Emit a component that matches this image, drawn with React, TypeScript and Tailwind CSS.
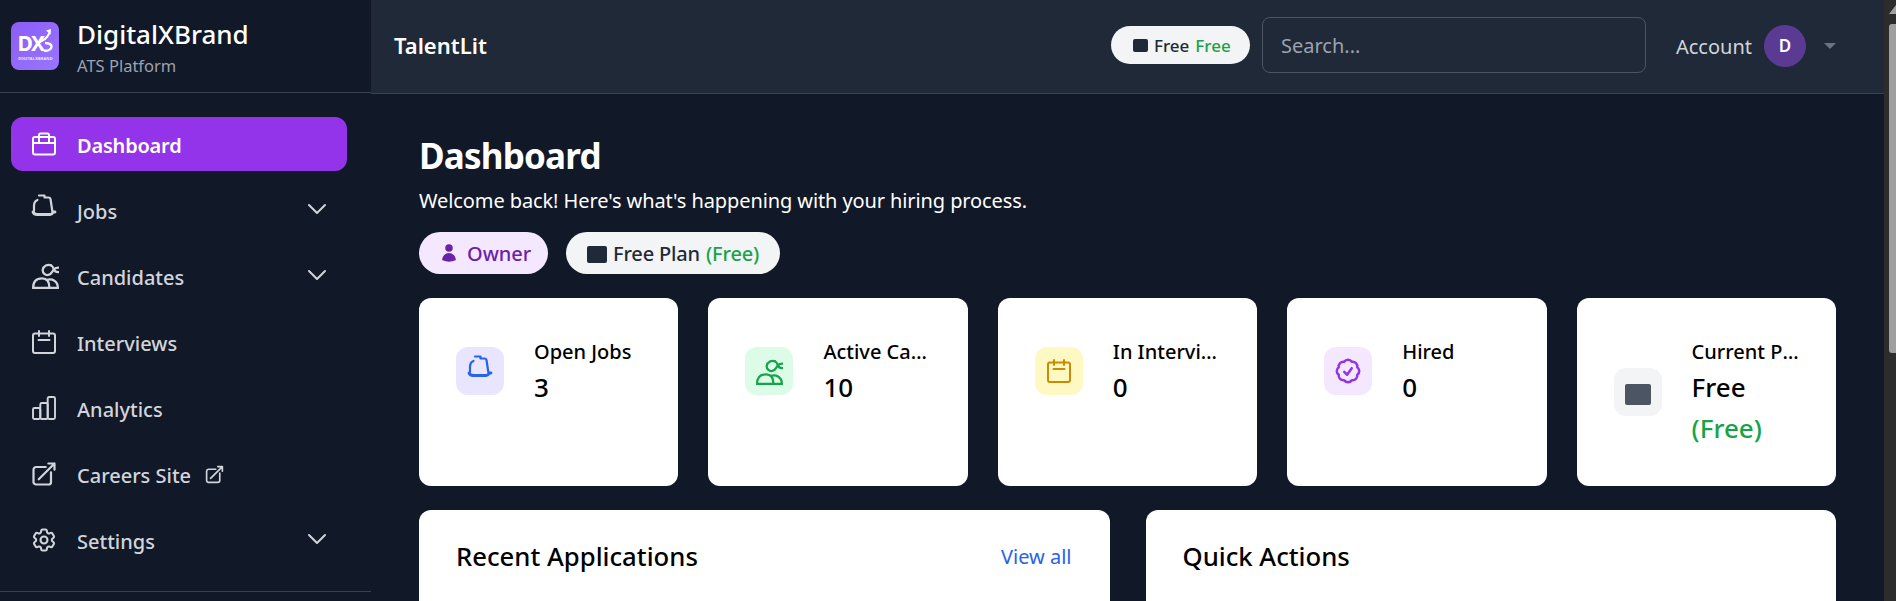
import React from "react";
import {
  HiOutlineCog6Tooth,
  HiOutlineCheckBadge,
  HiOutlineArrowTopRightOnSquare,
  HiUser,
} from "react-icons/hi2";
import { ChevronDown } from "lucide-react";

const font = { fontFamily: '"Noto Sans", "Open Sans", sans-serif' };

function BriefcaseIcon({ className }: { className?: string }) {
  return (
    <svg viewBox="0 0 24 24" fill="none" stroke="currentColor" strokeWidth="2" strokeLinecap="round" strokeLinejoin="round" className={className}>
      <rect x="1" y="5" width="22" height="17.500" rx="2" />
      <path d="M1.200 11h21.600" />
      <path d="M7 11V3a1.500 1.500 0 0 1 1.500-1.500h7A1.500 1.500 0 0 1 17 3v8" />
    </svg>
  );
}

function JobsIcon({ className }: { className?: string }) {
  return (
    <svg viewBox="0 0 24 24" fill="none" stroke="currentColor" strokeWidth="2.200" strokeLinecap="round" strokeLinejoin="round" className={"overflow-visible " + (className ?? "")}>
      <g transform="translate(0,-4)">
        <path d="M7 1.500h5.500v2h4c1 0 1.700.5 2 1.500l1.800 12" />
        <path d="M5.500 6C3 7 2 9 2 12v5" />
        <path d="M1 18c1 2 2 2.500 4 2.500h13c1.500 0 2.500-.7 3-2.500h2" strokeWidth="2.800" />
      </g>
    </svg>
  );
}

function CandidatesIcon({ className }: { className?: string }) {
  return (
    <svg viewBox="0 0 24 24" fill="none" stroke="currentColor" strokeWidth="2" strokeLinecap="round" strokeLinejoin="round" className={className}>
      <path d="M1 23C1 17 4.500 14.500 9 14.500c4 0 6.500 3 6.500 8.500" />
      <path d="M13 16c5-1.500 10 1 10 7" />
      <path d="M1 23h22" />
      <path d="M17 3c-3-1.500-7 .5-7.500 4-.2 3 2.500 5 5 4.500 3-.5 3.500-3.500 5-5 1-1 2.500-1.500 4-1.500" />
      <path d="M17 3c1.500.8 2 2 2.500 3.500.5 1.500 2 2.500 4 2.500" />
    </svg>
  );
}

function CalendarIcon({ className }: { className?: string }) {
  return (
    <svg viewBox="0 0 24 24" fill="none" stroke="currentColor" strokeWidth="2" strokeLinecap="round" strokeLinejoin="round" className={className}>
      <rect x="1" y="3.500" width="22" height="19.500" rx="2" />
      <path d="M7 1v5M17 1v5M6.500 10h11" />
    </svg>
  );
}

function BarsIcon({ className }: { className?: string }) {
  return (
    <svg viewBox="0 0 24 24" fill="none" stroke="currentColor" strokeWidth="1.900" strokeLinecap="round" strokeLinejoin="round" className={className}>
      <rect x="1" y="12" width="7.300" height="11" rx="1.500" />
      <rect x="8.300" y="7" width="7.400" height="16" rx="1.500" />
      <rect x="15.700" y="1" width="7.300" height="22" rx="1.500" />
    </svg>
  );
}

function PlanSquare({ className }: { className?: string }) {
  return <span className={"inline-block rounded-[2px] " + (className ?? "")} />;
}

function Logo() {
  return (
    <div className="w-12 h-12 rounded-lg shrink-0 bg-gradient-to-br from-[#8b5cf6] to-[#9a76ff]">
      <svg viewBox="0 0 48 48" className="w-12 h-12">
        <text x="6.500" y="29" fill="#fff" fontSize="21" fontWeight="700" fontFamily="Noto Sans, sans-serif" letterSpacing="-1.500">DX</text>
        <path d="M28 20c4-1 8-4 10.500-9" stroke="#fff" strokeWidth="2" fill="none" />
        <path d="M35 8.500l5-1.500-.5 5.500z" fill="#fff" />
        <path d="M34 21c5 .2 6.500 1.500 6.500 3.500S38 29.500 33 28.500" stroke="#fff" strokeWidth="2.400" fill="none" />
        <text x="24.500" y="38" textAnchor="middle" fill="#f1eaff" fontSize="3.900" fontWeight="700" fontFamily="Noto Sans, sans-serif" letterSpacing="0.200">DIGITALXBRAND</text>
      </svg>
    </div>
  );
}

function NavRow({
  icon,
  label,
  chevron,
  trailing,
}: {
  icon: React.ReactNode;
  label: string;
  chevron?: boolean;
  trailing?: React.ReactNode;
}) {
  return (
    <div className="h-[66px] pl-[32px] pr-[38px] flex items-center text-[#d1d5db]">
      <span className="w-6 h-6 shrink-0 mr-[21px]">{icon}</span>
      <span className="pt-[3px] text-[20px] leading-[30px] font-medium">{label}</span>
      {trailing}
      {chevron && <ChevronDown className="w-8 h-8 ml-auto -mt-[2px]" strokeWidth={1.500} />}
    </div>
  );
}

function StatCard({
  icon,
  boxClass,
  label,
  value,
  extra,
}: {
  icon: React.ReactNode;
  boxClass: string;
  label: string;
  value: string;
  extra?: string;
}) {
  return (
    <div className="bg-white rounded-xl pt-[37px] px-[37px] pb-[37px] min-w-0">
      <div className="flex items-center">
        <div className={"w-12 h-12 rounded-xl shrink-0 flex items-center justify-center " + boxClass}>{icon}</div>
        <div className="ml-[30px] min-w-0 flex-1 text-black">
          <div className="pt-[2px] text-[20px] leading-[30px] font-medium truncate">{label}</div>
          <div className="text-[26px] leading-[40px] font-medium">{value}</div>
          {extra && <div className="text-[26px] leading-[42px] font-medium text-[#16a34a]">{extra}</div>}
        </div>
      </div>
    </div>
  );
}

export default function App() {
  return (
    <div className="w-full h-screen overflow-hidden flex bg-[#111827]" style={font}>
      <aside className="w-[371px] shrink-0 h-full flex flex-col bg-[#111827]">
        <div className="h-[93px] shrink-0 px-[11px] flex items-center gap-[18px] border-b border-[#374151]">
          <Logo />
          <div className="min-w-0 pt-[2px]">
            <div className="text-[26px] leading-[34px] font-medium text-white">DigitalXBrand</div>
            <div className="mt-[3px] text-[16.500px] leading-[24px] text-[#9ca3af]">ATS Platform</div>
          </div>
        </div>
        <nav className="pt-6 flex flex-col h-[499px] shrink-0 border-b border-[#374151]">
          <div className="ml-[11px] mr-[24px] h-[54px] mb-[6px] rounded-xl bg-[#9333ea] text-white flex items-center pl-[21px]">
            <BriefcaseIcon className="w-6 h-6 mr-[21px]" />
            <span className="pt-[3px] text-[20px] leading-[30px] font-semibold tracking-[-0.2px]">Dashboard</span>
          </div>
          <NavRow icon={<JobsIcon className="w-6 h-6" />} label="Jobs" chevron />
          <NavRow icon={<CandidatesIcon className="w-[27px] h-[27px] -mt-[2px]" />} label="Candidates" chevron />
          <NavRow icon={<CalendarIcon className="w-6 h-6" />} label="Interviews" />
          <NavRow icon={<BarsIcon className="w-6 h-6" />} label="Analytics" />
          <NavRow
            icon={<HiOutlineArrowTopRightOnSquare className="w-[28px] h-[28px] -m-[2px]" strokeWidth={1.900} />}
            label="Careers Site"
            trailing={<HiOutlineArrowTopRightOnSquare className="w-[21px] h-[21px] ml-[13px]" strokeWidth={1.900} />}
          />
          <NavRow icon={<HiOutlineCog6Tooth className="w-[28px] h-[28px] -m-[2px]" strokeWidth={1.800} />} label="Settings" chevron />
        </nav>
      </aside>

      <main className="flex-1 min-w-0 h-full overflow-hidden flex flex-col">
        <header className="h-[94px] shrink-0 bg-[#1f2937] border-b border-[#374151] pl-[23px] pr-[48px] flex items-center">
          <span className="pb-[2px] text-[22px] font-semibold text-white">TalentLit</span>
          <div className="ml-auto pb-[4px] flex items-center">
            <div className="h-[38px] w-[139px] pl-[22px] rounded-full bg-[#f3f4f6] flex items-center gap-[6px] text-[17px] font-medium text-[#1f2937]">
              <PlanSquare className="w-[15px] h-[13px] mt-[2px] bg-[#1f2937]" />
              <span className="pt-[2px]">Free</span>
              <span className="pt-[2px] text-[#16a34a]">Free</span>
            </div>
            <div className="ml-3 w-[384px] h-[56px] pt-[3px] rounded-lg border border-[#4b5563] bg-[#1f2937] flex items-center px-[18px] text-[20px] text-[#9ca3af]">
              Search...
            </div>
            <span className="ml-[30px] pt-[4px] text-[20px] text-[#d1d5db]">Account</span>
            <div className="ml-3 mt-[2px] w-[42px] h-[42px] rounded-full bg-[#5b3a93] flex items-center justify-center text-[17px] font-semibold text-white">D</div>
            <span className="ml-[18px] mt-[2px] w-0 h-0 border-x-[6px] border-x-transparent border-t-[6px] border-t-[#6b7280]" />
          </div>
        </header>

        <div className="flex-1 min-h-0 overflow-hidden px-12 pt-[40px]">
          <h1 className="text-[35px] leading-[44px] font-bold tracking-[-0.8px] text-white">Dashboard</h1>
          <p className="mt-[8px] text-[20px] leading-[30px] tracking-[-0.1px] text-white">Welcome back! Here's what's happening with your hiring process.</p>
          <div className="mt-[16px] flex gap-[18px]">
            <div className="w-[129px] h-[42px] pl-[20px] rounded-full bg-[#f3e8ff] text-[#6b21a8] text-[20px] font-medium flex items-center gap-[8px]">
              <HiUser className="w-[20px] h-[20px]" />
              <span className="pt-[1px]">Owner</span>
            </div>
            <div className="w-[214px] h-[42px] pl-[21px] rounded-full bg-[#f3f4f6] text-[#1f2937] text-[20px] font-medium tracking-[-0.15px] flex items-center gap-[6px]">
              <PlanSquare className="w-[20px] h-[17px] mt-[3px] bg-[#1f2937]" />
              <span className="pt-[1px]">Free Plan</span>
              <span className="pt-[1px] text-[#16a34a]">(Free)</span>
            </div>
          </div>

          <div className="mt-[24px] grid grid-cols-5 gap-[30px]">
            <StatCard boxClass="bg-[#e9e5ff]" icon={<JobsIcon className="w-6 h-6 text-[#2563eb]" />} label="Open Jobs" value="3" />
            <StatCard boxClass="bg-[#dcfce7]" icon={<CandidatesIcon className="w-[27px] h-[27px] text-[#16a34a]" />} label="Active Candidates" value="10" />
            <StatCard boxClass="bg-[#fef9c3]" icon={<CalendarIcon className="w-6 h-6 text-[#ca8a04]" />} label="In Interviews" value="0" />
            <StatCard boxClass="bg-[#f3e8ff]" icon={<HiOutlineCheckBadge className="w-[30px] h-[30px] text-[#9333ea]" strokeWidth={2} />} label="Hired" value="0" />
            <StatCard boxClass="bg-[#f3f4f6]" icon={<PlanSquare className="w-[26px] h-[21px] mt-[5px] bg-[#4b5563]" />} label="Current Plan" value="Free" extra="(Free)" />
          </div>

          <div className="mt-[24px] grid grid-cols-2 gap-[36px]">
            <div className="h-[200px] bg-white rounded-xl pl-[37px] pr-[38px] pt-[29px] flex items-start justify-between">
              <span className="text-[25.700px] leading-[36px] font-medium text-black">Recent Applications</span>
              <span className="text-[20px] leading-[36px] text-[#2563eb]">View all</span>
            </div>
            <div className="h-[200px] bg-white rounded-xl pl-[37px] pt-[29px]">
              <span className="text-[25.700px] leading-[36px] font-medium text-black">Quick Actions</span>
            </div>
          </div>
        </div>
      </main>

      <div className="w-3 shrink-0 h-full bg-[#2c2c2c] flex flex-col items-end">
        <div className="w-full h-[24px] pt-[5px] flex justify-end">
          <span className="w-0 h-0 border-l-[7px] border-l-transparent border-b-[9px] border-b-[#9f9f9f]" />
        </div>
        <div className="w-[7px] h-[329px] rounded-bl-[3px] rounded-tl-[3px] bg-[#9f9f9f]" />
      </div>
    </div>
  );
}
